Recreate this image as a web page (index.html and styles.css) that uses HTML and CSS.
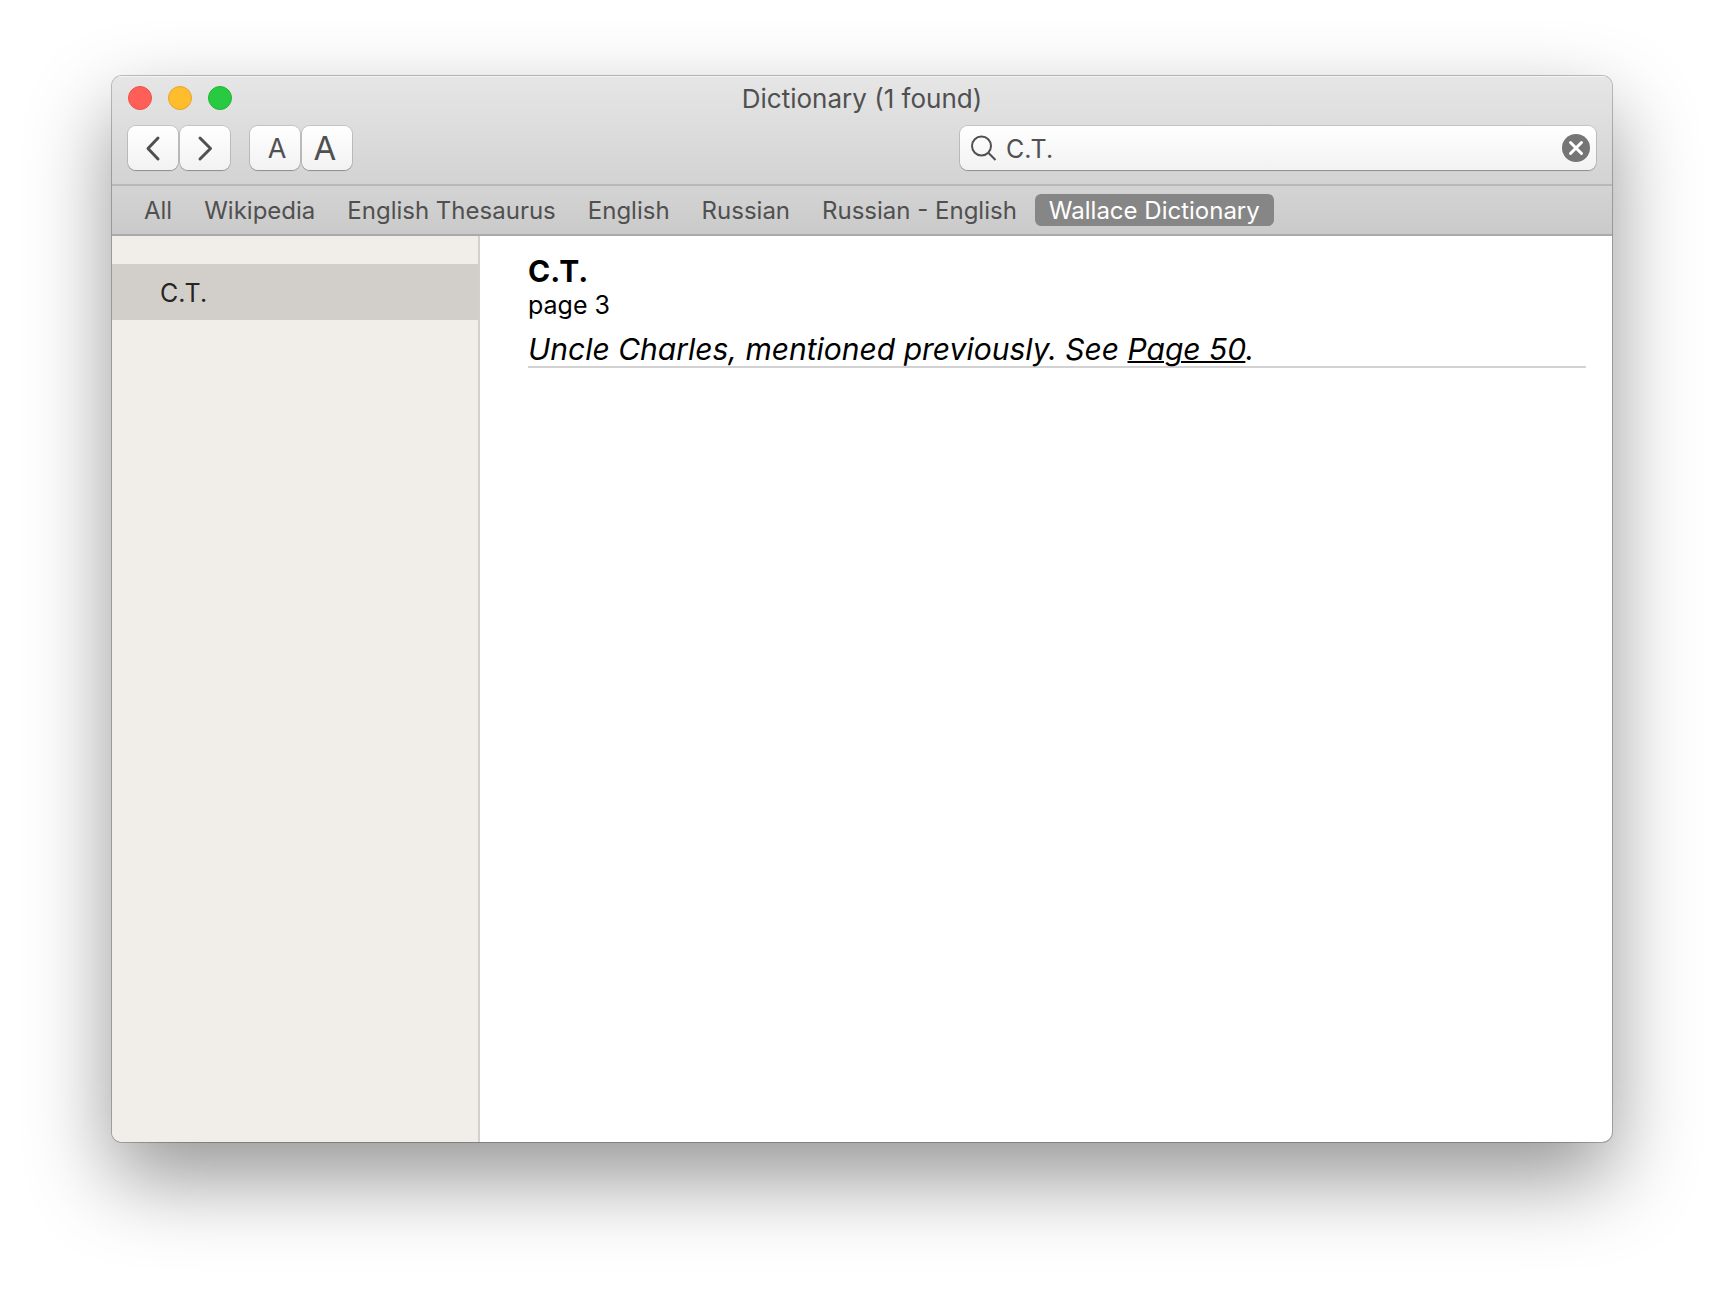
FILE: index.html
```html
<!DOCTYPE html>
<html lang="en">
<head>
<meta charset="utf-8">
<title>Dictionary (1 found)</title>
<link rel="stylesheet" href="styles.css">
</head>
<body>
<div class="window">
  <header class="toolbar">
    <div class="titlebar">
      <div class="lights">
        <button class="light light-close" aria-label="Close"></button>
        <button class="light light-minimize" aria-label="Minimize"></button>
        <button class="light light-zoom" aria-label="Zoom"></button>
      </div>
      <h1 class="title">Dictionary (1 found)</h1>
    </div>
    <div class="controls">
      <div class="group">
        <button class="tool" aria-label="Back"><svg width="50" height="44" viewBox="0 0 50 44"><path d="M30 12L20 22.500L30 33"/></svg></button>
        <button class="tool" aria-label="Forward"><svg width="50" height="44" viewBox="0 0 50 44"><path d="M20 12L30.500 22.500L20 33"/></svg></button>
      </div>
      <div class="group">
        <button class="tool tool-smaller" aria-label="Smaller text">A</button>
        <button class="tool tool-larger" aria-label="Larger text">A</button>
      </div>
      <form class="search">
        <svg class="search-icon" width="26" height="26" viewBox="0 0 26 26"><circle cx="10.500" cy="11" r="9.500"/><path d="M17.300 17.800L24.500 25"/></svg>
        <input class="search-input" type="text" aria-label="Search" value="C.T.">
        <button class="clear" type="reset" aria-label="Clear"><svg width="28" height="28" viewBox="0 0 28 28"><circle cx="14" cy="14" r="14"/><path d="M8.500 8.500L19.500 19.500M19.500 8.500L8.500 19.500"/></svg></button>
      </form>
    </div>
  </header>
  <nav class="sources" aria-label="Dictionaries">
    <button class="source">All</button>
    <button class="source">Wikipedia</button>
    <button class="source">English Thesaurus</button>
    <button class="source">English</button>
    <button class="source">Russian</button>
    <button class="source">Russian - English</button>
    <button class="source source-active">Wallace Dictionary</button>
  </nav>
  <div class="content">
    <aside class="sidebar">
      <ul class="results">
        <li class="result">C.T.</li>
      </ul>
    </aside>
    <main class="entry">
      <h2 class="headword">C.T.</h2>
      <p class="page">page 3</p>
      <p class="definition">Uncle Charles, mentioned previously. See <a class="link" href="#page-50">Page 50</a>.</p>
    </main>
  </div>
</div>
</body>
</html>
```
FILE: styles.css
```css
* {
  box-sizing: border-box;
}

body {
  display: flex;
  min-height: 100vh;
  margin: 0;
  padding: 76px 112px 148px;
  background: #fff;
  color: #000;
  font-family: Inter, "Liberation Sans", sans-serif;
  font-size: 24px;
}

button,
input {
  margin: 0;
  padding: 0;
  border: 0;
  background: none;
  color: inherit;
  font: inherit;
}

.window {
  display: flex;
  flex: 1;
  flex-direction: column;
  overflow: hidden;
  border-radius: 10px;
  background: #fff;
  box-shadow: 0 0 0 1px rgba(0, 0, 0, 0.24), 0 36px 84px rgba(0, 0, 0, 0.42);
}

.toolbar {
  padding: 10px 16px 14px;
  border-bottom: 2px solid #b8b8b8;
  background: linear-gradient(#e6e6e6, #d3d3d3);
  box-shadow: inset 0 1px #f4f4f4;
  color: #505050;
}

.titlebar {
  display: grid;
  grid-template-columns: 1fr auto 1fr;
  height: 26px;
}

.lights {
  display: flex;
  gap: 16px;
}

.light {
  width: 24px;
  height: 24px;
  border: 1px solid #e9524b;
  border-radius: 50%;
  background: #ff5f57;
}

.light-minimize {
  border-color: #e3a52a;
  background: #ffbd2e;
}

.light-zoom {
  border-color: #1fb530;
  background: #28ca42;
}

.title {
  margin: 0;
  font-size: 26px;
  font-weight: 400;
  line-height: 26px;
}

.controls {
  display: flex;
  gap: 20px;
  margin-top: 14px;
}

.group {
  display: flex;
  gap: 2px;
}

.tool,
.search {
  height: 44px;
  border-radius: 8px;
  background: linear-gradient(#fff, #f2f2f2);
  box-shadow: 0 0 0 1px rgba(0, 0, 0, 0.12), 0 1px 1px rgba(0, 0, 0, 0.24);
}

.tool {
  width: 50px;
}

.tool svg {
  display: block;
  fill: none;
  stroke: #505050;
  stroke-width: 3;
  stroke-linecap: round;
  stroke-linejoin: round;
}

.tool-smaller {
  padding-left: 4px;
  font-size: 27px;
}

.tool-larger {
  padding-right: 4px;
  font-size: 33px;
}

.search {
  display: flex;
  flex: 0 1 636px;
  align-items: center;
  gap: 9px;
  margin-left: auto;
  padding: 0 6px 0 11px;
}

.search-icon {
  flex: none;
  fill: none;
  stroke: #505050;
  stroke-width: 2;
}

.search-input {
  flex: 1;
  min-width: 0;
  padding-top: 2px;
  outline: 0;
  font-size: 25px;
}

.clear svg {
  display: block;
  fill: #757575;
}

.clear path {
  stroke: #fff;
  stroke-width: 3;
  stroke-linecap: round;
}

.sources {
  display: flex;
  align-items: center;
  gap: 4px;
  height: 50px;
  padding: 0 18px;
  border-bottom: 2px solid #aaa;
  background: linear-gradient(#d4d4d4, #cacaca);
  color: #505050;
}

.source {
  height: 32px;
  padding: 1px 14px 0;
  border-radius: 6px;
  line-height: 32px;
  white-space: nowrap;
}

.source-active {
  background: #868686;
  color: #fff;
}

.content {
  display: flex;
  flex: 1;
}

.sidebar {
  flex: 0 0 368px;
  padding-top: 28px;
  border-right: 2px solid #d2d1d0;
  background: #f1eee9;
}

.results {
  margin: 0;
  padding: 0;
  list-style: none;
}

.result {
  padding: 2px 0 0 48px;
  background: #d2cfca;
  color: #262522;
  font-size: 25px;
  line-height: 54px;
}

.entry {
  flex: 1;
  padding: 16px 26px 0 48px;
}

.headword {
  margin: 0;
  font-size: 30px;
  font-weight: 700;
  line-height: 38px;
}

.page {
  margin: 0;
  font-size: 25px;
  line-height: 30px;
}

.definition {
  margin: 12px 0 0;
  border-bottom: 2px solid #d2d2d2;
  font-size: 30px;
  font-style: italic;
  font-weight: 450;
  line-height: 34px;
}

.link {
  color: inherit;
  text-decoration-thickness: 2px;
}
```
